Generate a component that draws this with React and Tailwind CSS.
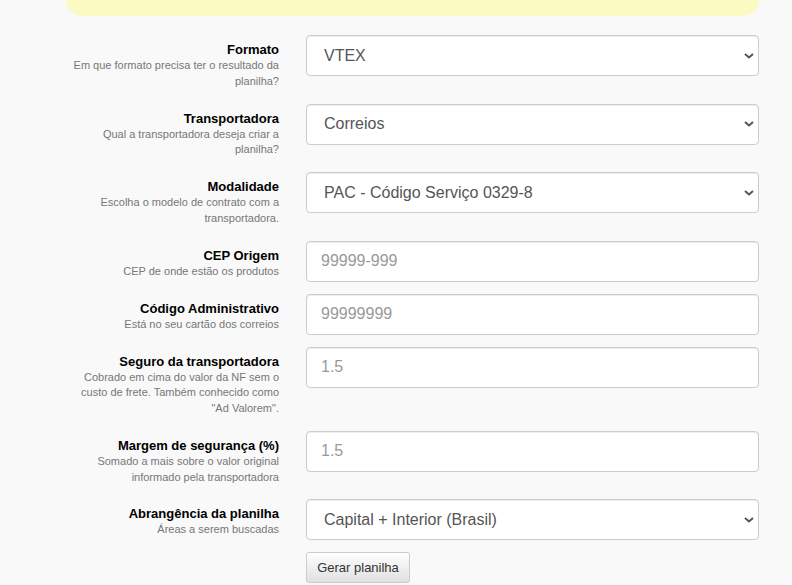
import React from "react";

const fields = [
  {
    label: "Formato",
    desc: ["Em que formato precisa ter o resultado da", "planilha?"],
    type: "select",
    value: "VTEX",
  },
  {
    label: "Transportadora",
    desc: ["Qual a transportadora deseja criar a", "planilha?"],
    type: "select",
    value: "Correios",
  },
  {
    label: "Modalidade",
    desc: ["Escolha o modelo de contrato com a", "transportadora."],
    type: "select",
    value: "PAC - Código Serviço 0329-8",
  },
  {
    label: "CEP Origem",
    desc: ["CEP de onde estão os produtos"],
    type: "input",
    placeholder: "99999-999",
  },
  {
    label: "Código Administrativo",
    desc: ["Está no seu cartão dos correios"],
    type: "input",
    placeholder: "99999999",
  },
  {
    label: "Seguro da transportadora",
    desc: [
      "Cobrado em cima do valor da NF sem o",
      "custo de frete. Também conhecido como",
      '"Ad Valorem".',
    ],
    type: "input",
    placeholder: "1.5",
  },
  {
    label: "Margem de segurança (%)",
    desc: ["Somado a mais sobre o valor original", "informado pela transportadora"],
    type: "input",
    placeholder: "1.5",
  },
  {
    label: "Abrangência da planilha",
    desc: ["Áreas a serem buscadas"],
    type: "select",
    value: "Capital + Interior (Brasil)",
  },
];

function Chevron() {
  return (
    <svg
      width="10"
      height="6"
      viewBox="0 0 10 6"
      className="pointer-events-none absolute right-[5px] top-1/2 -translate-y-1/2"
    >
      <path d="M1 1l4 3.5L9 1" fill="none" stroke="#555" strokeWidth="2" />
    </svg>
  );
}

function Field({ field }) {
  return (
    <div className="flex gap-[27px]">
      <div className="w-[213px] shrink-0 pt-[7px] pb-[2px] text-right">
        <div className="text-[13px] leading-4 font-bold text-black">{field.label}</div>
        <div className="text-[11px] leading-[15.75px] text-[#777]">
          {field.desc.map((line, i) => (
            <React.Fragment key={i}>
              {line}
              {i < field.desc.length - 1 && <br />}
            </React.Fragment>
          ))}
        </div>
      </div>
      <div className="flex-1">
        {field.type === "select" ? (
          <div className="relative">
            <select
              defaultValue={field.value}
              className="h-[41px] w-full appearance-none rounded-[4px] border border-[#ccc] bg-white pl-[17px] text-[16px] text-[#555] shadow-[inset_0_1px_1px_rgba(0,0,0,0.075)] outline-none"
            >
              <option>{field.value}</option>
            </select>
            <Chevron />
          </div>
        ) : (
          <input
            type="text"
            placeholder={field.placeholder}
            className="h-[41px] w-full rounded-[4px] border border-[#ccc] bg-white px-[14px] text-[16px] text-[#555] shadow-[inset_0_1px_1px_rgba(0,0,0,0.075)] outline-none placeholder:text-[#999]"
          />
        )}
      </div>
    </div>
  );
}

export default function App() {
  return (
    <div
      className="min-h-screen bg-[#f9f9f9]"
      style={{ fontFamily: '"Liberation Sans", Arial, sans-serif' }}
    >
      <div className="ml-[66px] w-[693px]">
        <div className="h-[16px] rounded-b-[16px] bg-[#fafac3]" />
        <div className="mt-[19px] flex flex-col gap-[12px]">
          {fields.map((f) => (
            <Field key={f.label} field={f} />
          ))}
          <div className="flex gap-[27px]">
            <div className="w-[213px] shrink-0" />
            <div className="flex-1">
              <button className="h-[31px] w-[104px] rounded-[3px] border border-[#ccc] bg-gradient-to-b from-white to-[#e0e0e0] text-[13px] text-[#333]">
                Gerar planilha
              </button>
            </div>
          </div>
        </div>
      </div>
    </div>
  );
}
